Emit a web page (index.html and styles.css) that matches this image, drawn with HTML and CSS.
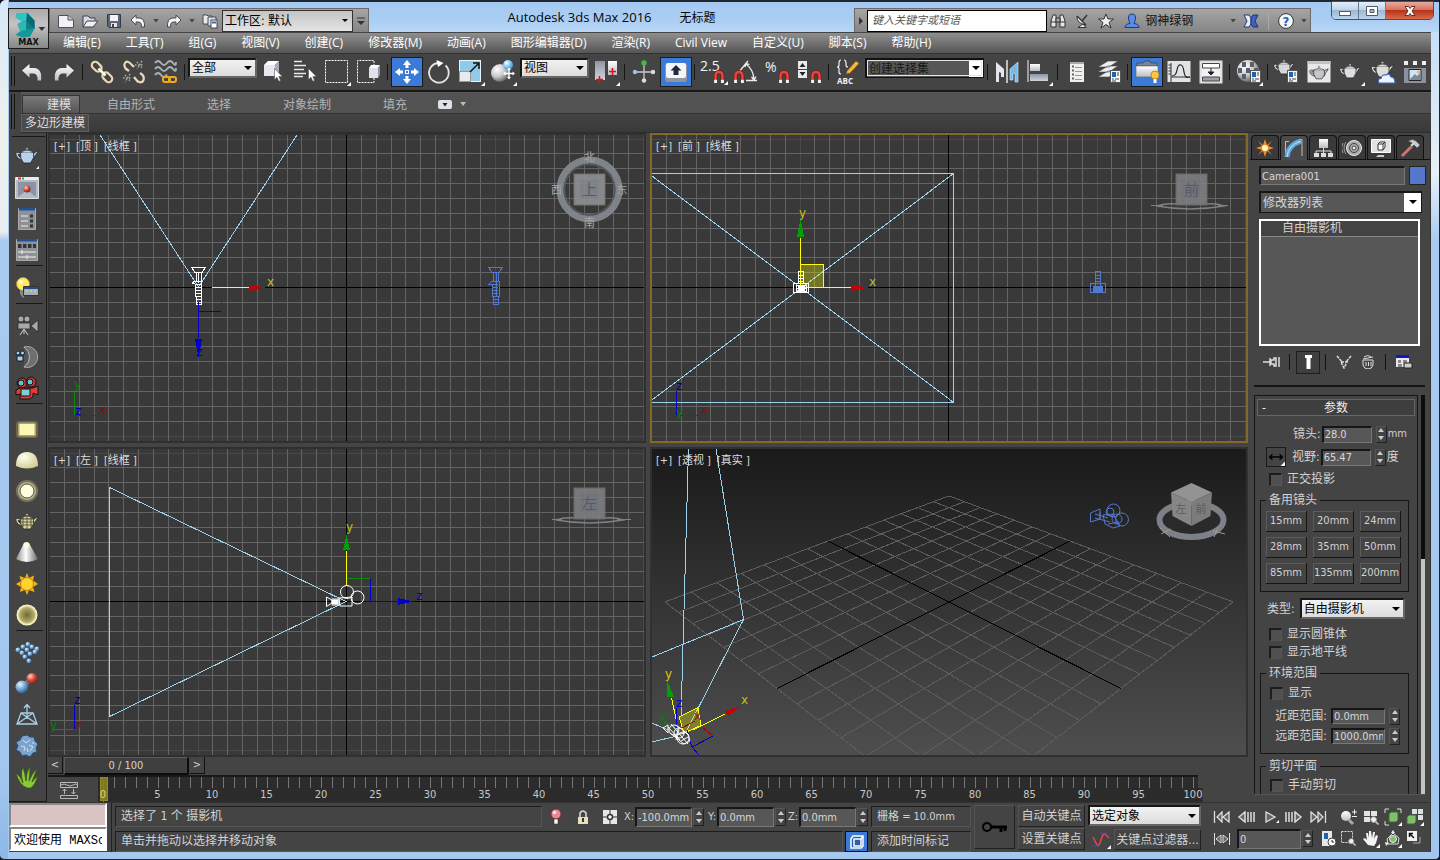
FILE: index.html
```html
<!DOCTYPE html>
<html lang="zh-CN">
<head>
<meta charset="utf-8">
<title>Autodesk 3ds Max 2016 - 无标题</title>
<link rel="stylesheet" href="styles.css">
</head>
<body>
<svg class="defs" width="0" height="0" aria-hidden="true">
  <defs>
    <linearGradient id="metal" x1="0" y1="0" x2="0" y2="1"><stop offset="0" stop-color="#ffffff"/><stop offset="1" stop-color="#b9bdc6"/></linearGradient>
    <linearGradient id="steel" x1="0" y1="0" x2="0" y2="1"><stop offset="0" stop-color="#8e95a5"/><stop offset="1" stop-color="#cfd3dc"/></linearGradient>
    <radialGradient id="ball" cx=".35" cy=".3" r=".8"><stop offset="0" stop-color="#ffffff"/><stop offset=".5" stop-color="#c9c9c9"/><stop offset="1" stop-color="#4a4a4a"/></radialGradient>
    <radialGradient id="blueball" cx=".35" cy=".3" r=".8"><stop offset="0" stop-color="#e8f6ff"/><stop offset=".5" stop-color="#6fa3d2"/><stop offset="1" stop-color="#1f4270"/></radialGradient>
    <radialGradient id="skyball" cx=".35" cy=".3" r=".8"><stop offset="0" stop-color="#ffffff"/><stop offset=".5" stop-color="#7cc4f0"/><stop offset="1" stop-color="#2f86c6"/></radialGradient>
    <radialGradient id="redball" cx=".35" cy=".3" r=".8"><stop offset="0" stop-color="#ffd0c0"/><stop offset=".5" stop-color="#d04838"/><stop offset="1" stop-color="#6a1810"/></radialGradient>
    <radialGradient id="cream" cx=".35" cy=".3" r=".8"><stop offset="0" stop-color="#fffff0"/><stop offset="1" stop-color="#cfc98c"/></radialGradient>
    <radialGradient id="disc" cx=".5" cy=".5" r=".5"><stop offset="0" stop-color="#6f6832"/><stop offset=".7" stop-color="#b3ab70"/><stop offset=".85" stop-color="#ece5a8"/><stop offset="1" stop-color="#fffbd0"/></radialGradient>
    <linearGradient id="cone" x1="0" y1="0" x2="1" y2="0"><stop offset="0" stop-color="#8a8a8a"/><stop offset=".45" stop-color="#ffffff"/><stop offset="1" stop-color="#666"/></linearGradient>
    <linearGradient id="dusk" x1="0" y1="0" x2="0" y2="1"><stop offset="0" stop-color="#1a1a1a"/><stop offset="1" stop-color="#4e4e4e"/></linearGradient>
    <symbol id="magnet" viewBox="0 0 10 12"><path d="M1.800 9V5a3.200 3.200 0 0 1 6.400 0V9" fill="none" stroke="#7c0c0c" stroke-width="3.400"/><path d="M1.800 9V5a3.200 3.200 0 0 1 6.400 0V9" fill="none" stroke="#e8493c" stroke-width="2.200"/><path d="M.500 9H3.200V12H.500zM6.800 9H9.500V12H6.800z" fill="#f2f2f2"/></symbol>
    <symbol id="cursor" viewBox="0 0 9 14"><path d="M.500.500V11.500L3 9.300 4.800 13.300 6.600 12.500 4.800 8.600H8.300z" fill="#fff" stroke="#555" stroke-width=".6"/></symbol>
    <symbol id="corner" viewBox="0 0 4 4"><path d="M4 0V4H0z" fill="#fff"/></symbol>
    <symbol id="teapot" viewBox="0 0 24 18"><path d="M6 6Q0 4 1 8 2 12 7 13L6.600 11Q3 9 3.200 7.500 4 6.800 6 7.500zM17 9Q18.500 5 23 4L22.500 5.500Q20 8 18 13z" stroke="#222" stroke-width=".8"/><path d="M5.500 5.500Q12 2.500 18.500 5.500 20 11 15.500 16H8.500Q4.500 11 5.500 5.500z" stroke="#222" stroke-width=".8"/><path d="M6.500 4.800Q12 1.500 17.500 4.800 12 6.500 6.500 4.800zM11 2.600a1.200 1.200 0 1 1 2 0z" stroke="#444" stroke-width=".4"/></symbol>
    <symbol id="panel" viewBox="0 0 11 13"><rect x=".500" y=".500" width="10" height="12" fill="#f4f4f4" stroke="#555"/><rect x="2" y="2" width="4" height="5" fill="#1e62b4"/><path d="M7 3H9M7 5H9M2 9H4M5 9H9M2 11H6" stroke="#444"/></symbol>
    <symbol id="lens" viewBox="0 0 10 10"><circle cx="4" cy="4" r="3.200" fill="#eef2f6" stroke="#999"/><path d="M6.200 6.200L9.500 9.500" stroke="#bbb" stroke-width="2"/></symbol>
  </defs>
</svg>

<div class="window">
  <header class="titlebar">
    <button class="app-button" aria-label="应用程序菜单">
      <svg viewBox="0 0 41 41"><path d="M8 5L19 4 26 12 27 20 22 29 13 29 7 27 12 23 9 16 14 13 7 9z" fill="#1b9b9d"/><path d="M8 5L19 4 26 12 14 13 7 9z" fill="#31c3c1"/><path d="M9 16L18 13 27 20 18 22z" fill="#0f7f86"/><path d="M14 13L18 13 18 22 12 23 9 16z" fill="#2db7b5"/><path d="M7 27L18 22 27 20 22 29 14 30z" fill="#16989b"/><path d="M19 4L27 12V21L18 13z" fill="#0a6a74"/><path d="M31 19H38L34.500 23z" fill="#333"/></svg>
      <b>MAX</b>
    </button>
    <div class="qat">
      <button aria-label="新建"><svg viewBox="0 0 18 16"><path d="M1.500 2.500H11L16.500 7V14.500H1.500z" fill="#f0f2f5" stroke="#4c515c"/><path d="M11 2.500V7H16.500" fill="#c9ced8" stroke="#4c515c"/></svg></button>
      <button aria-label="打开"><svg viewBox="0 0 18 16"><path d="M2 14V3H7L9 5H14V7" fill="#d8dbe2" stroke="#3d414a"/><path d="M2 14L6 8H17L12 14z" fill="#eef0f4" stroke="#3d414a"/></svg></button>
      <button aria-label="保存"><svg viewBox="0 0 18 16"><path d="M2.500 1.500H15.500V14.500H4L2.500 13z" fill="#5e6576" stroke="#343a46"/><path d="M5 2H13V8H5z" fill="#f4f4f6"/><path d="M6 10H12V14H6z" fill="#dfe2e8"/><path d="M7 11H9V14H7z" fill="#444"/></svg></button>
      <button aria-label="撤消"><svg viewBox="0 0 18 16"><path d="M2 7L7 2V5H11Q16 6 15.500 14H12.500Q13 9.500 10 9H7V12z" fill="#f3f4f6" stroke="#444a56"/></svg></button>
      <i class="drop"></i>
      <button aria-label="重做"><svg viewBox="0 0 18 16"><path d="M16 7L11 2V5H7Q2 6 2.500 14H5.500Q5 9.500 8 9H11V12z" fill="#f3f4f6" stroke="#444a56"/></svg></button>
      <i class="drop"></i>
      <button aria-label="项目文件夹"><svg viewBox="0 0 18 16"><path d="M2 11V2H6L7 3H11V11z" fill="#e8eaee" stroke="#444a56"/><path d="M7 13V4H15V13z" fill="#dde0e6" stroke="#444a56"/><rect x="10" y="7" width="6" height="8" fill="#fff" stroke="#444"/><rect x="11" y="8.500" width="4" height="2" fill="#2b6dbd"/></svg></button>
      <span class="pick workspace"><select aria-label="工作区"><option>工作区: 默认</option></select></span>
      <button class="more" aria-label="自定义"><svg viewBox="0 0 10 10"><path d="M1 2H9" stroke="#333"/><path d="M1 5H9L5 9z" fill="#333"/></svg></button>
    </div>
    <h1 class="title"><span class="app">Autodesk 3ds Max 2016</span><span>无标题</span></h1>
    <div class="infocenter">
      <button class="expand" aria-label="展开"><svg viewBox="0 0 6 8"><path d="M1 0L5 4 1 8z" fill="#333"/></svg></button>
      <input class="search" type="text" placeholder="键入关键字或短语" aria-label="搜索">
      <button aria-label="查找"><svg viewBox="0 0 18 16"><path d="M2 14V8L4 2H7V14zM11 14V2H14L16 8V14z" fill="#e4e6ea" stroke="#333"/><path d="M7 5H11V9H7z" fill="#aaa" stroke="#333"/><path d="M2 9H7M11 9H16" stroke="#333"/></svg></button>
      <button aria-label="通讯中心"><svg viewBox="0 0 18 16"><path d="M4 3Q3 10 13 12z" fill="#eee" stroke="#333"/><path d="M4 3L13 12M9 8L14 2" stroke="#333" stroke-width="1.400"/><path d="M5 14.500H13L10 11z" fill="#eee" stroke="#333"/></svg></button>
      <button aria-label="收藏夹"><svg viewBox="0 0 18 16"><path d="M9 1L11 6H16.500L12 9.500 14 15 9 11.500 4 15 6 9.500 1.500 6H7z" fill="#eceef2" stroke="#333"/></svg></button>
      <button class="user"><svg viewBox="0 0 18 16"><path d="M2 14.500Q2 11 7 10.500L6 8Q4 1 9 1 14 1 12 8L11 10.500Q16 11 16 14.500z" fill="#5b8ce6" stroke="#1d3a80"/></svg><span>钢神绿钢</span></button>
      <i class="drop"></i>
      <button aria-label="Exchange"><svg viewBox="0 0 18 16"><path d="M2 2H7L9 5V11L7 14H2L5 8z" fill="#e8ebf5" stroke="#1f3474"/><path d="M16 2H11L9 5V11L11 14H16L13 8z" fill="#3f62bd" stroke="#1f3474"/></svg></button>
      <i class="rule"></i>
      <button aria-label="帮助"><svg viewBox="0 0 18 16"><circle cx="9" cy="8" r="7.400" fill="#f6f7fa" stroke="#333"/><text x="9" y="12.500" text-anchor="middle" font-size="13" font-weight="700" fill="#2a5db0">?</text></svg></button>
      <i class="drop"></i>
    </div>
    <div class="winbuttons">
      <button aria-label="最小化"><svg viewBox="0 0 14 12"><rect x="1.500" y="6.500" width="11" height="4" fill="#fff" stroke="#555b66"/></svg></button>
      <button aria-label="最大化"><svg viewBox="0 0 14 12"><path d="M1.500 1.500H12.500V10.500H1.500zM5 4.500V7.500H9V4.500z" fill="#fff" fill-rule="evenodd" stroke="#555b66"/></svg></button>
      <button class="close" aria-label="关闭"><svg viewBox="0 0 14 12"><path d="M2 1.500H5.500L7 3.500 8.500 1.500H12L9 6 12 10.500H8.500L7 8.500 5.500 10.500H2L5 6z" fill="#fff" stroke="#5c3030"/></svg></button>
    </div>
  </header>

  <nav class="menubar">
    <a href="#">编辑(E)</a><a href="#">工具(T)</a><a href="#">组(G)</a><a href="#">视图(V)</a><a href="#">创建(C)</a><a href="#">修改器(M)</a><a href="#">动画(A)</a><a href="#">图形编辑器(D)</a><a href="#">渲染(R)</a><a href="#">Civil View</a><a href="#">自定义(U)</a><a href="#">脚本(S)</a><a href="#">帮助(H)</a>
  </nav>

  <div class="toolbar">
    <i class="grip"></i>
    <button aria-label="撤消"><svg viewBox="0 0 24 24"><path d="M2 10.500L9.500 4V8H14Q22.500 8.500 21 20.500H17.500Q18 14.500 14 13.500H9.500V17.500z" fill="url(#metal)"/></svg></button>
    <button aria-label="重做"><svg viewBox="0 0 24 24"><path d="M22 10.500L14.500 4V8H10Q1.500 8.500 3 20.500H6.500Q6 14.500 10 13.500H14.500V17.500z" fill="url(#metal)"/></svg></button>
    <i class="sep"></i>
    <button aria-label="选择并链接"><svg viewBox="0 0 24 24" fill="none" stroke="#ead9b6" stroke-width="2.200"><g transform="rotate(45 12 12)"><rect x="-1" y="8.500" width="11" height="7" rx="3.500"/><rect x="14" y="8.500" width="11" height="7" rx="3.500"/><path d="M7 12H17" stroke="#fff6e0" stroke-width="2.600"/></g></svg></button>
    <button aria-label="断开当前选择链接"><svg viewBox="0 0 24 24" fill="none" stroke="#ead9b6" stroke-width="2.200"><path d="M5 10Q1 6 3 3T9 4L12 7M3 8L7 11M15 21Q20 24 21.500 20T18 13M12 17L16 22" /><g stroke="#aaa" stroke-width="1.500" stroke-dasharray="1.500 1.500"><path d="M15 2L20 8M13 5H22M20 1L15 9M3 15L8 21M1 18H10M8 14L3 22"/></g></svg></button>
    <button aria-label="绑定到空间扭曲"><svg viewBox="0 0 24 24" fill="none"><path d="M1 3Q4 -1 7 3T13 3 19 3 22 2M1 9Q4 5 7 9T13 9 19 9 22 8M1 15Q4 11 7 15T13 14.500" stroke="#a9b0b8" stroke-width="2"/><g stroke="#f4a81d" stroke-width="2"><rect x="9" y="17" width="7" height="5" rx="2"/><rect x="15" y="17" width="7" height="5" rx="2"/></g></svg></button>
    <i class="sep"></i>
    <span class="pick light narrow"><select aria-label="选择过滤器"><option>全部</option></select></span>
    <button aria-label="选择对象"><svg viewBox="0 0 24 24"><path d="M3 5L7 1H18L14 5z" fill="#fff"/><path d="M3 5H14V16H3z" fill="#e7e9ee"/><path d="M14 5L18 1V12L14 16z" fill="#a9aebb"/><use href="#cursor" x="13" y="8" width="9" height="14"/></svg></button>
    <button aria-label="按名称选择"><svg viewBox="0 0 24 24"><path d="M1 1.500H9M1 5.500H13M1 9.500H11M1 13.500H13M1 16.500H10" stroke="#e8e8e8" stroke-width="1.500"/><use href="#cursor" x="15" y="8" width="9" height="14"/></svg></button>
    <button aria-label="矩形选择区域"><svg viewBox="0 0 24 24"><rect x=".500" y=".500" width="22" height="22" fill="none" stroke="#fff" stroke-dasharray="2 1"/><use href="#corner" x="22" y="22" width="4" height="4"/></svg></button>
    <button aria-label="窗口/交叉"><svg viewBox="0 0 24 24"><path d="M17 6V.500H.500V22.500H17V18" fill="none" stroke="#fff" stroke-dasharray="2 1"/><path d="M12 8L14 5H23L21 8z" fill="#fff"/><path d="M12 8H21V18H12z" fill="#dfe3ea"/><path d="M21 8L23 5V15L21 18z" fill="#8f96a5"/></svg></button>
    <i class="sep"></i>
    <button class="on" aria-label="选择并移动"><svg viewBox="0 0 24 24" fill="#fff"><path d="M12 0L16 5H13.500V8H10.500V5H8zM12 24L16 19H13.500V16H10.500V19H8zM0 12L5 8V10.500H8V13.500H5V16zM24 12L19 8V10.500H16V13.500H19V16z"/><rect x="10.500" y="10.500" width="3" height="3" fill="none" stroke="#fff"/></svg></button>
    <button aria-label="选择并旋转"><svg viewBox="0 0 24 24"><path d="M11 3A9.800 9.800 0 1 0 18.500 5.500" fill="none" stroke="#e6e6e6" stroke-width="1.800"/><path d="M9.500 0L16.500 3 11 7z" fill="#fff"/></svg></button>
    <button aria-label="选择并缩放"><svg viewBox="0 0 24 24"><rect x=".500" y=".500" width="21" height="21" fill="#8fcbe6" stroke="#e6f6ff"/><rect x=".500" y="11.500" width="11" height="10" fill="#e8eaed" stroke="#999"/><path d="M11 12L19 4M14 3H20V9" fill="none" stroke="#111" stroke-width="1.500"/><use href="#corner" x="22" y="22" width="4" height="4"/></svg></button>
    <button aria-label="选择并放置"><svg viewBox="0 0 24 24"><circle cx="9" cy="13" r="9" fill="url(#ball)"/><circle cx="17" cy="5" r="5" fill="url(#skyball)"/><path d="M18 9V18M13.500 13.500H22.500" stroke="#fff" stroke-width="1.500"/><path d="M18 7.500L20 10H16zM18 19.500L20 17H16zM12 13.500L14.500 11.500V15.500zM24 13.500L21.500 11.500V15.500z" fill="#fff"/><use href="#corner" x="22" y="22" width="4" height="4"/></svg></button>
    <span class="pick light narrow gap"><select aria-label="参考坐标系"><option>视图</option></select></span>
    <button aria-label="使用轴点中心"><svg viewBox="0 0 24 24"><path d="M1 1H11V20H1z" fill="url(#steel)"/><path d="M14 1H23V15H14z" fill="url(#metal)"/><path d="M5.500 16V23M2 19.500H9M18.500 8V15M15 11.500H22" stroke="#d8141a" stroke-width="1.600"/><use href="#corner" x="22" y="22" width="4" height="4"/></svg></button>
    <i class="sep"></i>
    <button aria-label="选择并操纵"><svg viewBox="0 0 24 24"><path d="M12 2V22M2 12H22" stroke="#c9c9c9" stroke-width="1.300"/><circle cx="12" cy="3" r="2.700" fill="#49b93c"/><circle cx="3" cy="12" r="2.200" fill="#a8c0d6"/><circle cx="21" cy="12" r="2.200" fill="#ddd"/><circle cx="12" cy="20.500" r="2.200" fill="#ddd"/></svg></button>
    <button class="on" aria-label="键盘快捷键覆盖切换"><svg viewBox="0 0 24 24"><rect x="1" y="3" width="22" height="19" rx="3" fill="#8d94a3"/><rect x="2" y="3" width="20" height="15" rx="2" fill="#f4f5f7"/><path d="M12 5L17.500 10.500H14.500V15H9.500V10.500H6.500z" fill="#222a3a"/></svg></button>
    <i class="sep"></i>
    <button aria-label="捕捉开关"><svg viewBox="0 0 24 24"><text x="-2" y="11" class="glyph">2.5</text><use href="#magnet" x="11" y="10" width="12" height="13"/><use href="#corner" x="22" y="21" width="4" height="4"/></svg></button>
    <button aria-label="角度捕捉"><svg viewBox="0 0 24 24" fill="none" stroke="#eee" stroke-width="1.300"><path d="M4 13L14 1M12 20.500H23M12 4Q19 9 20 19M11 7L12 3.500 15.500 4.500M17.500 17L20 20 22 16.500"/><use href="#magnet" x="-1" y="10" width="12" height="13" stroke="none"/></svg></button>
    <button aria-label="百分比捕捉"><svg viewBox="0 0 24 24"><text x="-1" y="12" class="glyph">%</text><use href="#magnet" x="12" y="10" width="12" height="13"/></svg></button>
    <button aria-label="微调器捕捉"><svg viewBox="0 0 24 24"><path d="M0 1H9V9H0zM0 10H9V18H0z" fill="#e8eaee"/><path d="M1.500 7L4.500 3 7.500 7zM1.500 12L4.500 16 7.500 12z" fill="#222"/><use href="#magnet" x="12" y="10" width="12" height="13"/></svg></button>
    <i class="sep"></i>
    <button aria-label="编辑命名选择集"><svg viewBox="0 0 24 24"><g fill="none" stroke="#f2f2f2" stroke-width="1.200"><path d="M5 0Q3 0 3 3V5Q3 7 1 7 3 7 3 9V12Q3 14 5 14M8 0Q10 0 10 3V5Q10 7 12 7"/></g><path d="M11 11L20 1 23 3.500 14 13 10.500 14z" fill="#f6b83c" stroke="#8a5a10" stroke-width=".7"/><text x="1" y="24" class="abc">ABC</text></svg></button>
    <span class="pick wide gap"><select aria-label="命名选择集"><option>创建选择集</option></select></span>
    <i class="sep"></i>
    <button aria-label="镜像"><svg viewBox="0 0 24 24"><path d="M1 2L9 9V17H6V13L4 12V22H1z" fill="#e4e6ec"/><path d="M23 2L15 9V20H18V14L20 13V22H23z" fill="#74b9e8" stroke="#d9f0ff" stroke-width=".6"/><path d="M12 0V23" stroke="#fff" stroke-width="1.300"/></svg></button>
    <button aria-label="对齐"><svg viewBox="0 0 24 24"><path d="M1 0V22" stroke="#ccc" stroke-width="1.300"/><path d="M3 4H13V11H3z" fill="url(#metal)"/><path d="M3 14H21V21H3z" fill="url(#steel)"/><use href="#corner" x="22" y="22" width="4" height="4"/></svg></button>
    <i class="sep"></i>
    <button aria-label="场景资源管理器"><svg viewBox="0 0 24 24"><path d="M5 2H19V22H5z" fill="#f0f0ee"/><path d="M5 2H19V4H5z" fill="#aaa"/><path d="M10 7.500H17M10 11.500H17M10 15.500H17M10 19.500H17" stroke="#999"/><path d="M7 6.500H9M7 10.500H9M7 14.500H9M7 18.500H9" stroke="#666" stroke-width="2"/></svg></button>
    <button aria-label="层资源管理器"><svg viewBox="0 0 24 24"><path d="M1 7L11 1H21L12 7zM1 12L11 6H21L12 12zM1 17L11 11H21L12 17z" fill="#eceef1" stroke="#444" stroke-width=".6"/><use href="#panel" x="13" y="10" width="11" height="13"/></svg></button>
    <i class="sep"></i>
    <button class="on" aria-label="切换功能区"><svg viewBox="0 0 24 24"><path d="M2 3H8L10 1H15L16 3H22V6H2z" fill="#7c8495" stroke="#333" stroke-width=".6"/><path d="M1 6H23V17H1z" fill="url(#metal)" stroke="#666" stroke-width=".6"/><circle cx="20" cy="15" r="4" fill="#ffc94a" stroke="#d88410"/><path d="M18.500 19H21.500V23H18.500z" fill="#fff"/></svg></button>
    <button aria-label="曲线编辑器"><svg viewBox="0 0 24 24"><path d="M.500 1H23.500V22H.500z" fill="#e2e3e5"/><path d="M4 3V22M4 17H23M1.500 5H4M1.500 8H4M1.500 11H4M1.500 14H4" stroke="#333"/><path d="M5 16Q9 16 10 10T14 5Q16 5 17 12T23 17" fill="none" stroke="#222" stroke-width="1.200"/></svg></button>
    <button aria-label="图解视图"><svg viewBox="0 0 24 24"><path d="M1.500 1.500H22.500V22.500H1.500z" fill="#f1f1f1" stroke="#ddd" stroke-width="2"/><path d="M3.500 3.500H20.500V8H3.500z" fill="#fff" stroke="#444"/><path d="M3.500 17H20.500V21H3.500z" fill="#9ba1ae" stroke="#444"/><path d="M12 8V12M9 12H15L12 15z" stroke="#222" fill="#222"/></svg></button>
    <i class="sep"></i>
    <button aria-label="材质编辑器"><svg viewBox="0 0 24 24"><circle cx="11" cy="11" r="11" fill="url(#ball)"/><path d="M5 2H9V7H5zM13 2H17V7H13zM1 8H5V13H1zM9 8H13V13H9zM5 14H9V19H5zM17 8H21V12H17z" fill="#58606e"/><use href="#panel" x="13" y="10" width="11" height="13"/><use href="#corner" x="22" y="22" width="4" height="4"/></svg></button>
    <i class="sep"></i>
    <button aria-label="渲染设置"><svg viewBox="0 0 24 24"><use href="#teapot" x="-2" y="-1" width="22" height="17" fill="#d6d8dc"/><use href="#panel" x="12" y="10" width="11" height="13"/></svg></button>
    <button aria-label="渲染帧窗口"><svg viewBox="0 0 24 24"><path d="M.500 1H23.500V22.500H.500z" fill="#e8e8ea"/><path d="M.500 1H23.500V4H.500z" fill="#c0c3ca"/><use href="#teapot" x="2" y="5" width="20" height="16" fill="#c4c6cb"/></svg></button>
    <button aria-label="渲染产品"><svg viewBox="0 0 24 24"><use href="#teapot" x="0" y="3" width="22" height="17" fill="#dcdee2"/><use href="#corner" x="22" y="22" width="4" height="4"/></svg></button>
    <button aria-label="云渲染"><svg viewBox="0 0 24 24"><use href="#teapot" x="-1" y="1" width="25" height="18" fill="#dcdcd8"/><path d="M8 23Q6 19 10 18.500 11 14 15 15 18 12.500 20 17 24 17 24 23z" fill="#eef4fd" stroke="#3769c6" stroke-width="1.200"/></svg></button>
    <button aria-label="渲染库"><svg viewBox="0 0 24 24"><path d="M1 1H5V5H1zM10 1H14V5H10zM19 1H23V5H19z" fill="#eee"/><path d="M1 8H23V23H1z" fill="#8b919e"/><path d="M6 9.500H18V20.500H6z" fill="#cfe6f5" stroke="#222"/><path d="M7 19L12 14 14 16 17 13V20H7z" fill="#7e8a98"/><circle cx="15.500" cy="12" r="1.500" fill="#f2b23a"/></svg></button>
  </div>

  <div class="ribbon">
    <i class="grip"></i>
    <div class="ribbon-body">
      <div class="ribbon-tabs">
        <button class="active">建模</button><button>自由形式</button><button>选择</button><button>对象绘制</button><button>填充</button>
        <button class="pill" aria-label="最小化功能区"><svg viewBox="0 0 14 9"><rect width="14" height="9" rx="2" fill="#dfe2e8"/><path d="M4.500 3H9.500L7 6.500z" fill="#222"/></svg></button><i class="drop pale"></i>
      </div>
      <div class="ribbon-panel"><span>多边形建模</span></div>
    </div>
  </div>

  <main class="workspace-area">
    <aside class="leftbar">
      <button aria-label="茶壶"><svg viewBox="0 0 24 24"><use href="#teapot" x="0" y="2" width="24" height="18" fill="#b7d2ea"/><use href="#corner" x="21" y="20" width="4" height="4"/></svg></button>
      <button aria-label="渲染窗口"><svg viewBox="0 0 24 24"><path d="M.500 1.500H23.500V22.500H.500z" fill="#b5bcc7" stroke="#ddd"/><path d="M1 1H23V4H1z" fill="#ececec"/><path d="M3 2.500H6" stroke="#c33" stroke-width="2"/><path d="M7 2.500H9" stroke="#3a3" stroke-width="2"/><path d="M3 21V6H21V21L12 14z" fill="#8a94a4"/><circle cx="12" cy="13" r="3.500" fill="url(#redball)"/></svg></button>
      <button aria-label="列表面板"><svg viewBox="0 0 24 24"><path d="M3.500 1.500H20.500V22.500H3.500z" fill="#8d9094" stroke="#aaa"/><path d="M4 1H20V3.500H4z" fill="#1c5398"/><path d="M6 9H13M6 14H13M6 19H13" stroke="#eee"/><path d="M15 7.500H18V10.500H15zM15 12.500H18V15.500H15zM15 17.500H18V20.500H15z" fill="#333"/></svg></button>
      <button aria-label="滑块面板"><svg viewBox="0 0 24 24"><path d="M1.500 1.500H22.500V22.500H1.500z" fill="#8d9094" stroke="#aaa"/><path d="M2 1H22V3.500H2z" fill="#1c5398"/><path d="M3 6H6.500V10H3zM8 6H11.500V10H8zM13 6H16.500V10H13zM18 6H21V10H18z" fill="#333"/><path d="M3 14H21M3 19H21M7 12V16M12 17V21" stroke="#f2f2f2"/></svg></button>
      <i class="bar"></i>
      <button aria-label="灯光列表"><svg viewBox="0 0 24 24"><circle cx="8" cy="8" r="6.500" fill="#ffe86b" stroke="#b99b2a" stroke-width=".6"/><circle cx="6" cy="6" r="2" fill="#fffbd8"/><path d="M5 14H11V18L8 22 5 18z" fill="#888"/><path d="M8.500 10.500H23.500V19.500H8.500z" fill="#a8adb4" stroke="#333"/><path d="M9 11H23V13H9z" fill="#1c5398"/><path d="M11 15H22" stroke="#f3e15a" stroke-dasharray="2 2"/></svg></button>
      <i class="bar"></i>
      <button aria-label="摄影机"><svg viewBox="0 0 24 24"><g fill="#a8a8a8" stroke="#222" stroke-width=".7"><circle cx="6" cy="5" r="3"/><circle cx="12" cy="5" r="3"/><path d="M3 9H15V15H3zM16 12L23 6V18z"/></g><path d="M9 15L5 21M9 15L13 21M9 15V20" stroke="#ccc"/></svg></button>
      <button aria-label="摄影机视图"><svg viewBox="0 0 24 24"><path d="M9 2A10.500 10.500 0 1 1 9 22Q14 12 9 2z" fill="#6f6f6f" stroke="#aaa"/><path d="M9 2A12 12 0 0 1 9 22" fill="#555" stroke="#bbb"/><g fill="#a9cfe8" stroke="#123"><circle cx="3" cy="8" r="2"/><circle cx="7.500" cy="8" r="2"/><path d="M2 11H8V16H2z"/></g></svg></button>
      <button aria-label="立体摄影机"><svg viewBox="0 0 24 24"><g stroke="#111"><circle cx="7" cy="7" r="5" fill="#d83434"/><circle cx="16" cy="6" r="5" fill="#d83434"/><circle cx="6" cy="7" r="3" fill="#5cc6cf"/><circle cx="15" cy="6" r="3" fill="#5cc6cf"/><path d="M1 14L5 12H18L23 10V19L18 17V21L14 23H5V18L1 19z" fill="#e23c3c"/><path d="M6 13H15V20H6z" fill="#7ad0d6"/></g></svg></button>
      <i class="bar tall"></i>
      <button aria-label="平面灯"><svg viewBox="0 0 24 24"><rect x="1" y="4" width="22" height="17" rx="3" fill="#6a6848"/><rect x="3" y="5.500" width="18" height="14" rx="2" fill="#a9a678"/><rect x="4.500" y="7" width="15" height="11" fill="#fdf9b4"/></svg></button>
      <button aria-label="穹顶灯"><svg viewBox="0 0 24 24"><path d="M1 18Q1 4 12 4T23 18Q12 23 1 18z" fill="url(#cream)"/></svg></button>
      <button aria-label="球体灯"><svg viewBox="0 0 24 24"><circle cx="12" cy="12" r="11" fill="#77745a"/><circle cx="12" cy="12" r="9" fill="#b9b695"/><circle cx="12" cy="12" r="7" fill="#fffee0" stroke="#55533a"/></svg></button>
      <button aria-label="网格灯"><svg viewBox="0 0 24 24"><use href="#teapot" x="0" y="3" width="24" height="18" fill="#d9d2a4"/><path d="M6 9H18M6 12H18M7 15H17M8 7V17M12 6V19M16 7V17" stroke="#4c482c" stroke-width=".8"/></svg></button>
      <button aria-label="聚光灯"><svg viewBox="0 0 24 24"><path d="M9 2H14L23 18Q12 24 1 18z" fill="url(#cone)"/><circle cx="11.500" cy="4" r="3" fill="#fffbe0"/></svg></button>
      <button aria-label="太阳"><svg viewBox="0 0 24 24"><path d="M12 1L14 6 19 3.500 18 8.500 23 12 18 15 19.500 20 14 18 12 23 10 18 5 20 6 15 1 12 6 9 4.500 4 10 6z" fill="#f7b51b"/><circle cx="12" cy="12" r="6.500" fill="#ffd22c" stroke="#c07c0a"/></svg></button>
      <button aria-label="环境灯"><svg viewBox="0 0 24 24"><circle cx="12" cy="12" r="10.500" fill="url(#disc)"/></svg></button>
      <i class="bar"></i>
      <button aria-label="散布"><svg viewBox="0 0 24 24" fill="url(#blueball)"><circle cx="3" cy="9" r="2.500"/><circle cx="8" cy="6" r="2.500"/><circle cx="13" cy="3.500" r="2.500"/><circle cx="7" cy="12" r="2.500"/><circle cx="12" cy="9" r="2.500"/><circle cx="17" cy="6" r="2.500"/><circle cx="22" cy="8" r="2.500"/><circle cx="10" cy="16" r="2.500"/><circle cx="15" cy="13" r="2.500"/><circle cx="20" cy="11" r="2.500"/><circle cx="14" cy="20" r="2.500"/></svg></button>
      <button aria-label="代理"><svg viewBox="0 0 24 24"><path d="M7 15L17 6" stroke="#777" stroke-width="5"/><circle cx="7" cy="15" r="6.500" fill="url(#blueball)"/><circle cx="17" cy="6.500" r="5.500" fill="url(#redball)"/></svg></button>
      <button aria-label="平面"><svg viewBox="0 0 24 24" fill="none" stroke="#a9cfe8" stroke-width="1.300"><path d="M6 10H18L22 21H2zM6 10L22 21M18 10L2 21M12 16V2M9 5L12 1.500 15 5"/></svg></button>
      <button aria-label="毛石"><svg viewBox="0 0 24 24"><path d="M12 1L15 3 19 3 20 7 23 10 21 14 22 18 18 19 15 23 11 21 7 22 5 18 1 16 3 12 1 8 5 6 7 2z" fill="#7ba3cb" stroke="#2c4c72"/><path d="M8 6L11 9 15 6M6 12L10 13 9 17M14 11L18 13 15 17M12 14L13 18M17 8L19 10" stroke="#cfe2f4" fill="none"/></svg></button>
      <button aria-label="毛发"><svg viewBox="0 0 24 24"><path d="M12 23Q4 20 1 8 6 12 8 18 5 8 8 2 10 8 11 16 11 8 15 1 15 10 14 16 17 8 22 4 19 11 17 17 20 13 23 11 20 20 16 23z" fill="#8ac73a" stroke="#355a12" stroke-width=".8"/></svg></button>
    </aside>

    <section class="center">
      <div class="viewports">
        <div class="viewport">
          <svg class="canvas" viewBox="50 135 594 306" preserveAspectRatio="xMidYMid slice">
            <g data-grid="346,287"></g>
            <g class="crisp">
              <path class="cone" d="M100 135L198.500 287 297 135"/>
              <g class="wire white"><path d="M191.500 267.500H205.500L202 272.500H195zM196 272V281H201V272M192 283L195 281H201V296H195V284zM196 296V304H201.500V296M195 284H201M195 287H201M195 290H201M195 293H201M196 299H201M196 302H201M198.500 272V283"/></g>
              <path d="M212 287.500H249" stroke="#ff0"/><path d="M221.500 288V311" stroke="#b40000"/><path d="M198.500 302V338M199 311.500H221" stroke="#0000c8"/>
              <path d="M249 285L265 287.500 249 291z" fill="#c80000"/><path d="M195 339H202L198.500 357z" fill="#0000c8"/>
              <path d="M74.500 392V415" stroke="#0a8c0a"/><path d="M75 415.500H100" stroke="#b40000"/>
              <g class="wire blue"><path d="M488.500 267.500H502.500L499 272.500H492zM493 272V281H498V272M489 284L492 281H499V296H492V284zM493 296V304H498.500V296M492 284H498M492 287H498M492 290H498M492 293H498M493 299H498M493 302H498M496 272V296"/></g>
            </g>
            <g class="axis"><text x="267" y="286" fill="#c8be14">x</text><text x="196" y="356" fill="#0000c8">z</text><text x="74" y="388" fill="#0a7c0a">y</text><text x="75" y="415" fill="#0000c8">z</text><text x="99" y="414" fill="#8c0a0a">x</text></g>
            <g class="cube"><circle cx="589.500" cy="189.500" r="29.500" fill="none" stroke="#868a92" stroke-width="7"/><circle cx="589.500" cy="189.500" r="25" fill="none" stroke="#5a5c60" stroke-width="1.500"/><rect x="574" y="174" width="31" height="31" fill="#8f9192" stroke="#777"/><rect x="580" y="180" width="19" height="19" fill="#858991"/><text x="589.500" y="195" text-anchor="middle" class="face">上</text>
              <g class="compass"><text x="589.500" y="161">北</text><text x="589.500" y="227">南</text><text x="556.500" y="194">西</text><text x="622" y="194">东</text></g></g>
          </svg>
          <div class="vlabel"><button>[+]</button><button>[顶 ]</button><button>[线框 ]</button></div>
        </div>
        <div class="viewport active">
          <svg class="canvas" viewBox="652 135 594 306" preserveAspectRatio="xMidYMid slice">
            <g data-grid="948,287"></g>
            <g class="crisp">
              <path class="cone" d="M652 173.500H953.500V402.500H652M652 176L953 402M652 400L953 174"/>
              <rect x="800.500" y="264.500" width="23" height="23" fill="#ffff00" fill-opacity=".3" stroke="#ff0"/>
              <path d="M800.500 238V272M814 287.500H851" stroke="#ff0"/><path d="M797 237H804L800.500 219z" fill="#00a000"/><path d="M851 285L868 287.500 851 291z" fill="#c80000"/>
              <g class="wire white"><path d="M793.500 283.500H808.500V292.500H793.500zM796 285H806V291H796zM798 284V271.500H803V284M798 275H803M798 278H803M798 281H803M797 288H806"/><path d="M798 285H804V291H798z" fill="#fff"/></g>
              <path d="M676.500 391V415" stroke="#0000c8"/><path d="M680 415.500H703" stroke="#b40000"/>
              <g class="wire blue"><path d="M1090.500 283.500H1105.500V292.500H1090.500zM1095 292V271.500H1100V292M1095 275H1100M1095 278H1100M1095 281H1100"/><path d="M1093 286H1102V291H1093z" fill="#5378d0"/></g>
            </g>
            <g class="axis"><text x="799" y="217" fill="#c8be14">y</text><text x="869" y="286" fill="#c8be14">x</text><text x="676" y="390" fill="#0000a8">z</text><text x="676" y="416" fill="#0a7c0a">y</text><text x="701" y="414" fill="#8c0a0a">x</text></g>
            <g class="cube"><path d="M1157 206Q1166 203 1176 204M1207 204Q1216 203 1224 206Q1190 212 1157 206" fill="none" stroke="#85888d" stroke-width="1.500"/><path d="M1151 205.500H1163M1218 205.500H1228" stroke="#85888d"/><rect x="1176" y="174" width="31" height="31" fill="#7e7f80" stroke="#6f7070"/><rect x="1182" y="180" width="19" height="19" fill="#787b82"/><text x="1191.500" y="195" text-anchor="middle" class="face">前</text></g>
          </svg>
          <div class="vlabel"><button>[+]</button><button>[前 ]</button><button>[线框 ]</button></div>
        </div>
        <div class="viewport">
          <svg class="canvas" viewBox="50 449 594 306" preserveAspectRatio="xMidYMid slice">
            <g data-grid="346,601"></g>
            <g class="crisp">
              <path class="cone" d="M346 601.500L109.500 487.500V716.500z"/>
              <path d="M346.500 551V586" stroke="#ff0"/><path d="M343 550H350L346.500 535z" fill="#00a000"/><path d="M347 578.500H370" stroke="#0a8c0a"/><path d="M370.500 579V601M360 601.500H398" stroke="#0000c8"/><path d="M398 598L414 601.500 398 605z" fill="#0000c8"/>
              <path d="M74.500 705V729" stroke="#0000c8"/><path d="M52 729.500H74" stroke="#0a8c0a"/>
            </g>
            <g class="wire white"><circle cx="347" cy="592" r="6.500"/><circle cx="357.500" cy="597.500" r="6.500"/><path d="M326.500 597V606.500L332 603V600zM332 599H339V605H332M339 598L352 597V606H340z"/><path d="M332 600H338V604H332z" fill="#fff"/></g>
            <g class="axis"><text x="346" y="531" fill="#c8be14">y</text><text x="416" y="600" fill="#0000c8">z</text><text x="74" y="704" fill="#0000a8">z</text><text x="50" y="729" fill="#0a7c0a">y</text><text x="75" y="728" fill="#8c0a0a">x</text></g>
            <g class="cube"><path d="M556 520Q565 517 574 518M605 518Q615 517 623 520Q590 526 556 520" fill="none" stroke="#85888d" stroke-width="1.500"/><path d="M552 519.500H562M617 519.500H631" stroke="#85888d"/><rect x="574" y="488" width="31" height="31" fill="#7e7f80" stroke="#6f7070"/><rect x="580" y="494" width="19" height="19" fill="#787b82"/><text x="589.500" y="509" text-anchor="middle" class="face">左</text></g>
          </svg>
          <div class="vlabel"><button>[+]</button><button>[左 ]</button><button>[线框 ]</button></div>
        </div>
        <div class="viewport">
          <svg class="canvas" viewBox="652 449 594 306" preserveAspectRatio="xMidYMid slice">
            <rect x="652" y="449" width="594" height="306" fill="url(#dusk)"/>
            <g id="floor" class="crisp"></g>
            <g class="crisp">
              <path class="cone" d="M688.500 449L681 717M716 449L743.500 619.500 652 657M743.500 619.500L687 730M652 723L668 730M652 742L677 736"/>
              <path d="M679 717L698 707.500 701 725.500 684 733z" fill="#ffff00" fill-opacity=".3" stroke="#ff0"/>
              <path d="M671.500 698L677 723M693 730L725 714" stroke="#ff0"/><path d="M667 680L674 697H667.500z" fill="#00a000"/><path d="M725 711L741 706 728 716z" fill="#c80000"/>
              <path d="M702 727L713 736M678 730L695 721" stroke="#b40000"/><path d="M713 736L692 747 687 730M692 747L699 755M676.500 708V730" stroke="#0000c8"/><path d="M664 722L677 729" stroke="#0a8c0a"/>
            </g>
            <g class="wire white"><circle cx="674" cy="730" r="5"/><circle cx="683" cy="738" r="6"/><circle cx="679" cy="733" r="5"/><path d="M663 728L668 725V733zM668 727L680 740M671 724L688 744M670 733L684 744 690 741 688 734 676 725M675 735L685 733M678 729L676 740M681 741L688 737"/></g>
            <g class="wire blue"><circle cx="1113.500" cy="510.500" r="6.500"/><circle cx="1110" cy="512" r="4"/><circle cx="1122" cy="519.500" r="6.500"/><circle cx="1117" cy="519" r="5"/><path d="M1090.500 522V513L1100 509V519zM1095 514L1108 518M1095 518L1110 522M1103 515L1113 514 1120 526 1113 528 1105 524zM1100 512V520M1108 524L1119 522"/></g>
            <g class="axis"><text x="665" y="678" fill="#d8ce14">y</text><text x="741" y="704" fill="#c8be14">x</text><text x="676" y="707" fill="#0000c8">z</text><text x="659" y="720" fill="#0a7c0a">y</text><text x="694" y="720" fill="#a01414">x</text></g>
            <g class="cube3d"><ellipse cx="1191.500" cy="520" rx="32" ry="17" fill="#2a2a2a" stroke="#7c8089" stroke-width="6"/><path d="M1191.500 483L1212 492.500 1191.500 502 1171 492.500z" fill="#939393"/><path d="M1171 492.500L1191.500 502V526L1172.500 516z" fill="#868686"/><path d="M1212 492.500L1191.500 502V526L1210.500 516z" fill="#7c7c7c"/><text x="1181" y="513" text-anchor="middle">左</text><text x="1201" y="513" text-anchor="middle">前</text><path d="M1160 528L1170 537M1161 534L1171 529M1213 531L1225 534M1218 527L1214 537" stroke="#9a9a9a"/></g>
          </svg>
          <div class="vlabel"><button>[+]</button><button>[透视 ]</button><button>[真实 ]</button></div>
        </div>
      </div>
      <div class="timeslider"><button>&lt;</button><button class="thumb">0 / 100</button><button>&gt;</button></div>
      <div class="trackbar">
        <button class="minicurve" aria-label="迷你曲线编辑器"><svg viewBox="0 0 18 18" fill="none" stroke="#b8b8b8"><path d="M.500 1.500H17.500V6.500H.500zM.500 14.500H17.500V17.500H.500zM1 4Q4 2 7 4T13 4 17 4M4.500 13V8M2.500 10L4.500 8 6.500 10M13.500 8V13M11.500 11L13.500 13 15.500 11"/></svg></button>
        <div class="ruler"><div id="ticks" class="ticks"></div></div>
      </div>
    </section>

    <aside class="command">
      <div class="tabs">
        <button aria-label="创建"><svg viewBox="0 0 20 20"><path d="M10 1L12 7 17 3 13 8 19 10 13 12 17 17 12 13 10 19 8 13 3 17 7 12 1 10 7 8 3 3 8 7z" fill="#f08a32"/><circle cx="10" cy="10" r="3" fill="#fff6b0"/></svg></button>
        <button class="active" aria-label="修改"><svg viewBox="0 0 20 20"><path d="M1.500 19V3.500H5M15 1.500H18V18" fill="none" stroke="#bbb"/><path d="M3 19Q4 7 17 3" fill="none" stroke="#5ea7dc" stroke-width="5"/><path d="M3 19Q4 7 17 3" fill="none" stroke="#c9e7fa"/></svg></button>
        <button aria-label="层次"><svg viewBox="0 0 20 20"><path d="M6 1H15V10H6z" fill="url(#metal)"/><path d="M10.500 10V13M3 15V13H18V15M10.500 13V15" stroke="#ddd" fill="none"/><path d="M1 15H6V19H1zM8 15H13V19H8zM15 15H20V19H15z" fill="#ddd"/></svg></button>
        <button aria-label="运动"><svg viewBox="0 0 20 20" fill="none"><circle cx="12" cy="10" r="7.500" fill="#aaa" stroke="#eee"/><circle cx="12" cy="10" r="4.500" stroke="#444"/><circle cx="12" cy="10" r="2" stroke="#444" fill="#eee"/><path d="M4 4Q0 10 4 16M1 5Q-2 10 1 15" stroke="#999"/></svg></button>
        <button aria-label="显示"><svg viewBox="0 0 20 20"><path d="M.500 1.500H19.500V14.500H.500z" fill="#dfe1e5" stroke="#fff"/><path d="M7 17H13V19H5z" fill="#ccc"/><path d="M7 6L9 4H14V9L12 12H7zM7 6H12V12M12 6L14 4" fill="#fff" stroke="#333"/></svg></button>
        <button aria-label="实用程序"><svg viewBox="0 0 20 20"><path d="M2 18L12 8" stroke="#c8746a" stroke-width="3"/><path d="M8 3Q13 0 16 3L20 7 17 10 14 7 12 9 10 7 12 5z" fill="#c9cdd3" stroke="#444" stroke-width=".6"/></svg></button>
      </div>
      <div class="namerow"><input type="text" value="Camera001" aria-label="对象名称"><button class="swatch" aria-label="颜色"></button></div>
      <span class="pick modlist"><select aria-label="修改器列表"><option>修改器列表</option></select></span>
      <ul class="stack"><li>自由摄影机</li></ul>
      <div class="stacktools">
        <button aria-label="锁定堆栈"><svg viewBox="0 0 18 14"><path d="M0 7H7M7 3V11M16 2V12" stroke="#ddd" stroke-width="1.500"/><path d="M8 5H11V3H13V11H11V9H8z" fill="none" stroke="#ddd" stroke-width="1.500"/></svg></button><i></i>
        <button class="pressed" aria-label="显示最终结果"><svg viewBox="0 0 18 14"><path d="M6 0H13V3H11.500V14H7.500V3H6z" fill="#fff"/></svg></button><i></i>
        <button aria-label="使唯一"><svg viewBox="0 0 18 14" fill="none" stroke="#ddd"><path d="M2 1L7 7M16 1L11 7M6 7H12L9 13z" stroke-dasharray="3 1" stroke-width="1.500"/></svg></button>
        <button aria-label="移除修改器"><svg viewBox="0 0 18 14" fill="none" stroke="#ddd"><path d="M5 2Q9 -1 12 2M4 5H14V10Q13 14 9 14 5 14 4 10zM4 4L14 2M7 7V11M9.500 7V11M12 7V11"/></svg></button><i></i>
        <button aria-label="配置修改器集"><svg viewBox="0 0 18 14"><path d="M1 0H14V12H1z" fill="#e8e8e8"/><path d="M1 0H14V3H1z" fill="#1414c8"/><path d="M3 5H6V8H3zM8 5H12V8H8zM3 9H7V12H3z" fill="#888"/><path d="M9 8H17V13H9z" fill="#ccc" stroke="#222"/></svg></button>
      </div>
      <div class="rollarea">
        <div class="rollout">
          <button class="rollhead"><span>-</span>参数</button>
          <div class="rollbody">
            <div class="field lensrow"><label for="lens-mm">镜头:</label><input id="lens-mm" value="28.0"><span class="spin"><button aria-label="增"></button><button aria-label="减"></button></span><span class="unit">mm</span></div>
            <div class="field lensrow"><button class="fovdir" aria-label="视野方向"><svg viewBox="0 0 20 20"><path d="M3 10H17M6 7L3 10 6 13M14 7L17 10 14 13" fill="none" stroke="#000" stroke-width="1.500"/><path d="M20 15V20H15z" fill="#fff"/></svg></button><label for="fov">视野:</label><input id="fov" value="65.47"><span class="spin"><button aria-label="增"></button><button aria-label="减"></button></span><span>度</span></div>
            <label class="check"><input type="checkbox">正交投影</label>
            <fieldset><legend>备用镜头</legend>
              <div class="stock"><button>15mm</button><button>20mm</button><button>24mm</button><button>28mm</button><button>35mm</button><button>50mm</button><button>85mm</button><button>135mm</button><button>200mm</button></div>
            </fieldset>
            <div class="field typerow"><label for="camtype">类型:</label><span class="pick light"><select id="camtype"><option>自由摄影机</option></select></span></div>
            <label class="check"><input type="checkbox">显示圆锥体</label>
            <label class="check"><input type="checkbox">显示地平线</label>
            <fieldset class="env"><legend>环境范围</legend>
              <label class="check"><input type="checkbox">显示</label>
              <div class="field range"><label for="near">近距范围:</label><input id="near" value="0.0mm"><span class="spin"><button aria-label="增"></button><button aria-label="减"></button></span></div>
              <div class="field range"><label for="far">远距范围:</label><input id="far" value="1000.0mm"><span class="spin"><button aria-label="增"></button><button aria-label="减"></button></span></div>
            </fieldset>
            <fieldset class="clip"><legend>剪切平面</legend>
              <label class="check"><input type="checkbox">手动剪切</label>
            </fieldset>
          </div>
        </div>
        <div class="scroll"><i></i></div>
      </div>
    </aside>
  </main>

  <footer class="status">
    <div class="script"><input class="macro" aria-label="宏录制器"><input class="listener" value="欢迎使用 MAXScript" aria-label="侦听器"></div>
    <div class="prompts">
      <div class="line">
        <p class="msg">选择了 1 个 摄影机</p>
        <button class="ico" aria-label="孤立当前选择"><svg viewBox="0 0 16 18"><circle cx="8" cy="6" r="5" fill="#e88a94" stroke="#8c2c36"/><circle cx="6.500" cy="4.500" r="1.800" fill="#fde"/><path d="M6 11H10V16H6z" fill="#fff" stroke="#333" stroke-width=".6"/></svg></button>
        <button class="ico" aria-label="选择锁定切换"><svg viewBox="0 0 16 18"><path d="M5 9V5Q8 1 11 5V9" fill="none" stroke="#ddd" stroke-width="1.500"/><path d="M3 9H13V16H3z" fill="#e9ddc0"/><path d="M8 10V14" stroke="#333" stroke-width="2"/></svg></button>
        <button class="ico" aria-label="绝对模式变换输入"><svg viewBox="0 0 16 18"><path d="M1 2H15V16H1z" fill="#e3e6ea"/><path d="M8 2V6M8 12V16M1 9H5M11 9H15" stroke="#333"/><circle cx="8" cy="9" r="2.500" fill="#fff" stroke="#333" stroke-width="1.500"/></svg></button>
        <div class="coords">
          <label for="cx">X:</label><input id="cx" value="-100.0mm"><span class="spin"><button aria-label="增"></button><button aria-label="减"></button></span>
          <label for="cy">Y:</label><input id="cy" value="0.0mm"><span class="spin"><button aria-label="增"></button><button aria-label="减"></button></span>
          <label for="cz">Z:</label><input id="cz" value="0.0mm"><span class="spin"><button aria-label="增"></button><button aria-label="减"></button></span>
        </div>
        <p class="msg fixed latin">栅格 = 10.0mm</p>
      </div>
      <div class="line">
        <p class="msg">单击并拖动以选择并移动对象</p>
        <button class="degrade" aria-label="自适应降级"><svg viewBox="0 0 16 16" fill="#2c60ac" stroke="#fff" stroke-width="1.500"><path d="M2 5L4 2H14V12L12 14H2z"/><path d="M5 5H12V12H5zM12 5L14 2"/></svg></button>
        <p class="msg fixed">添加时间标记</p>
      </div>
    </div>
    <button class="bigkey" aria-label="设置关键点"><svg viewBox="0 0 26 12"><circle cx="5" cy="6" r="4" fill="none" stroke="#000" stroke-width="2"/><path d="M9 6H25M19 6V11M23 6V10" stroke="#000" stroke-width="3"/></svg></button>
    <div class="keys"><button>自动关键点</button><button>设置关键点</button></div>
    <div class="filters">
      <span class="pick light"><select aria-label="选择集"><option>选定对象</option></select></span>
      <div class="filterrow"><button class="tangent" aria-label="切线"><svg viewBox="0 0 20 18"><path d="M2 6L6 14Q8 16 10 9T14 3L18 7" fill="none" stroke="#e04848" stroke-width="1.500"/><path d="M1 15H9M9 2H16" stroke="#3c4ea8"/><path d="M20 14V18H16z" fill="#fff"/></svg></button><button class="keyfilter">关键点过滤器...</button></div>
    </div>
    <div class="transport">
      <div class="line"><button aria-label="转至开头"><svg viewBox="0 0 18 12"><path d="M1.500 0V12M9 1V11L4 6zM16 1V11L10 6z" stroke="#ddd" fill="#666" stroke-width="1.300"/></svg></button><button aria-label="上一帧"><svg viewBox="0 0 18 12"><path d="M8 1V11L2 6zM11 1V11M14 1V11M17 1V11" stroke="#ddd" fill="#666" stroke-width="1.500"/></svg></button><button aria-label="播放"><svg viewBox="0 0 18 12"><path d="M5 1L14 6 5 11z" stroke="#ddd" fill="#666" stroke-width="1.300"/><path d="M18 9V12H15z" fill="#fff"/></svg></button><button aria-label="下一帧"><svg viewBox="0 0 18 12"><path d="M10 1V11L16 6zM1 1V11M4 1V11M7 1V11" stroke="#ddd" fill="#666" stroke-width="1.500"/></svg></button><button aria-label="转至结尾"><svg viewBox="0 0 18 12"><path d="M16.500 0V12M9 1V11L14 6zM2 1V11L8 6z" stroke="#ddd" fill="#666" stroke-width="1.300"/></svg></button>
        <span class="nav">
          <button aria-label="缩放"><svg viewBox="0 0 18 18"><circle cx="6" cy="8" r="5" fill="url(#metal)"/><path d="M9 12L13 16" stroke="#aaa" stroke-width="3"/><path d="M12 4H17M14.500 1.500V6.500M12 8.500H17" stroke="#eee"/></svg></button>
          <button aria-label="缩放所有视图"><svg viewBox="0 0 18 18"><path d="M2 3H8V8H2zM9 3H15V8H9zM2 9H8V14H2z" fill="#e0e3e8"/><use href="#lens" x="8" y="8" width="9" height="9"/></svg></button>
          <button aria-label="最大化显示"><svg viewBox="0 0 18 18"><path d="M1 5V1H5M13 1H17V5M1 13V17H5" stroke="#ddd" fill="none"/><path d="M5 6L7 4H14V12L12 14H5z" fill="#7fc06a" stroke="#3b6a2c"/><path d="M18 14V18H14z" fill="#fff"/></svg></button>
          <button aria-label="所有视图最大化"><svg viewBox="0 0 18 18"><path d="M6 1H11V6H6zM12 1H17V6H12zM12 7H17V12H12z" fill="#dde0e6"/><path d="M1 9L3 7H10V14L8 16H1z" fill="#7fc06a" stroke="#3b6a2c"/><path d="M18 14V18H14z" fill="#fff"/></svg></button>
        </span>
      </div>
      <div class="line"><button aria-label="关键点模式"><svg viewBox="0 0 18 12"><path d="M1.500 0V12M16.500 0V12M8 2V10L3 6zM10 2V10L15 6z" stroke="#ddd" fill="#666"/></svg></button><input class="frame" value="0" aria-label="当前帧"><span class="spin"><button aria-label="增"></button><button aria-label="减"></button></span>
        <span class="nav">
          <button class="config" aria-label="时间配置"><svg viewBox="0 0 18 18"><path d="M3 1H13V16H3z" fill="#e8e8e8"/><path d="M5 3H9V9H5z" fill="#1e62b4"/><circle cx="13" cy="12" r="4" fill="#fff" stroke="#444"/><path d="M13 10V12H15" stroke="#222" fill="none"/></svg></button>
          <button aria-label="缩放区域"><svg viewBox="0 0 18 18"><path d="M1.500 1.500H12.500V12.500H1.500z" fill="none" stroke="#ddd" stroke-dasharray="2 1"/><use href="#lens" x="8" y="8" width="8" height="8"/></svg></button>
          <button aria-label="平移"><svg viewBox="0 0 18 18"><path d="M6 15L1 9 3 8 5 10 4 3 6 3 7 8 7 1 9 1 10 8 11 2 13 2 12 9 14 5 16 6 14 13 12 16z" fill="#f3f3f3"/><path d="M18 14V18H14z" fill="#fff"/></svg></button>
          <button aria-label="环绕"><svg viewBox="0 0 18 18"><path d="M9 3L15 8 14 14H4L3 9z" fill="none" stroke="#ddd"/><circle cx="9" cy="9" r="3.500" fill="#7fc06a" stroke="#eee"/><path d="M7 3L9 0 11 3zM1 12L5 13 2 16z" fill="#eee"/><path d="M18 14V18H14z" fill="#fff"/></svg></button>
          <button aria-label="最大化视口切换"><svg viewBox="0 0 18 18"><path d="M1 1H11V11H1z" fill="#f2f2f2"/><path d="M4 4L8 8M3.500 7V3.500H7" stroke="#111" stroke-width="1.500" fill="none"/><path d="M14 7V13H7" fill="none" stroke="#aaa"/></svg></button>
        </span>
      </div>
    </div>
  </footer>
</div>
<script src="app.js"></script>
</body>
</html>
```
FILE: styles.css
```css
* { box-sizing: border-box; }
html, body { height: 100%; }
body {
  margin: 0;
  background: #10151c;
  color: #d2d2d2;
  font: 12px/16px "DejaVu Sans Condensed", "Noto Sans CJK SC", sans-serif;
  overflow: hidden;
}
button, input, select { font: inherit; color: inherit; margin: 0; }
button { background: none; border: 0; padding: 0; display: flex; align-items: center; justify-content: center; white-space: nowrap; }
p, h1, ul { margin: 0; padding: 0; }
svg { display: block; }
.defs { position: absolute; }

.window {
  position: relative;
  display: flex;
  flex-direction: column;
  height: 100vh;
  padding: 0 8px 7px 9px;
  border: solid #1b232e;
  border-width: 0 1px 1px 0;
  border-radius: 6px 6px 5px 5px;
  background:
    linear-gradient(#d7e8f8, #eef1ee 15%, #e8eef0 27%, #a9cbf1 28%, #a3c6ef 90%, #8db8e6) left / 8px 100% no-repeat,
    linear-gradient(#bfdaf6, #e8f1f8 20%, #a9cbf1 28%, #a3c6ef) right / 8px 100% no-repeat,
    #a5c8ef;
}

/* title bar */
.titlebar { display: flex; height: 32px; border-top: 2px solid #20262f; margin: 0 -8px 0 0; background: linear-gradient(#a5caf2, #aacdf2 60%, #b9d7f6); }
.app-button {
  position: absolute; left: 8px; top: 8px; width: 41px; height: 41px; z-index: 2;
  border: 1px solid #1b1b1b; background: linear-gradient(#a9a9a9, #c4c4c4 40%, #888); align-items: flex-end;
}
.app-button svg { position: absolute; width: 39px; height: 39px; left: 0; top: 0; }
.app-button b { color: #111; font-size: 9px; line-height: 12px; position: relative; font-weight: 700; }
.qat, .infocenter { display: flex; align-items: center; align-self: flex-end; height: 24px; background: linear-gradient(#a5a5a5, #858585); border: 1px solid #6b6b6b; border-bottom: 0; }
.qat { width: 320px; margin-left: 40px; padding-left: 4px; }
.qat > button:not(.more) { width: 24px; }
.qat button svg, .infocenter button svg { width: 18px; height: 16px; }
.drop { width: 12px; height: 4px; background: #444; clip-path: polygon(25% 0, 75% 0, 50% 100%); flex: none; }
.drop.pale { background: #bbb; }
.workspace { width: 131px; height: 22px; }
.workspace select { background: linear-gradient(#c4c4c4, #e4e4e4); color: #000; border: 1px solid #333; padding-left: 5px; font-size: 12px; }
.more { flex: 1; }
.more svg { width: 10px !important; height: 10px !important; }
.title { flex: 1; display: flex; gap: 28px; justify-content: center; align-items: center; font: 400 12px/16px "Noto Sans CJK SC", sans-serif; color: #05080c; padding-bottom: 1px; white-space: nowrap; }
.title .app { font: 13px/16px "Open Sans", sans-serif; }
.infocenter { width: 457px; }
.infocenter > button { width: 24px; }
.infocenter .expand { width: 12px; }
.infocenter .expand svg { width: 6px; height: 8px; }
.search { width: 180px; height: 22px; border: 1px solid #000; background: #fff; padding: 0 4px; font-size: 11px; font-style: italic; color: #333; }
.search::placeholder { color: #555; opacity: 1; }
.infocenter .user { width: 76px; gap: 4px; color: #111; margin: 0 31px 0 2px; }
.rule { width: 1px; height: 18px; background: #aaa; margin: 0 5px; }
.winbuttons { display: flex; height: 19px; margin: -1px 5px 0 20px; border: 1px solid #45505e; border-radius: 0 0 5px 5px; overflow: hidden; }
.winbuttons button { width: 27px; background: linear-gradient(#e3eefa, #c0d3e8 45%, #9db7d3 50%, #bcd4ec); border-right: 1px solid #66788e; }
.winbuttons svg { width: 14px; height: 12px; }
.winbuttons .close { width: 47px; background: linear-gradient(#e9a99b, #d57461 45%, #b9331c 50%, #d86a4c); border: 0; }

/* menu */
.menubar { display: flex; gap: 25px; height: 21px; padding-left: 54px; align-items: center; background: linear-gradient(#8f8f8f, #555); border-top: 1px solid #444; white-space: nowrap; }
.menubar a { color: #fff; text-decoration: none; font: 12px/18px "Open Sans", "Noto Sans CJK SC", sans-serif; }

/* main toolbar */
.toolbar { display: flex; align-items: center; height: 39px; background: #444; border-top: 1px solid #333; border-bottom: 2px solid #181818; overflow: hidden; }
.grip { width: 7px; flex: none; align-self: stretch; margin: 2px 0 4px; background: linear-gradient(90deg, transparent 2px, #151515 2px 3px, transparent 3px 5px, #151515 5px 6px, transparent 6px); }
.toolbar > button { width: 32px; height: 30px; flex: none; }
.toolbar svg { width: 24px; height: 24px; overflow: visible; }
.toolbar .on { background: #3b7ad6; border: 1px solid #1b1b1b; }
.sep { width: 6px; height: 16px; flex: none; background: linear-gradient(90deg, transparent 2px, #161616 2px 3px, transparent 3px); }
.glyph { font: 14px "Open Sans", sans-serif; fill: #f2f2f2; }
.abc { font: 700 8px "Open Sans", sans-serif; fill: #f2f2f2; }

/* drop-downs */
.pick { position: relative; display: block; flex: none; }
.pick select { appearance: none; width: 100%; height: 100%; border-radius: 0; padding: 0 2px; display: block; }
.pick::after { content: ""; position: absolute; right: 5px; top: 50%; margin-top: -2px; border: 4px solid transparent; border-top-color: #000; border-bottom: 0; pointer-events: none; }
.workspace::after { border-width: 3px; border-bottom: 0; }
.light select { background: linear-gradient(#f2f2f2, #dcdcdc); color: #000; border: 2px solid #161616; border-right-color: #666; border-bottom-color: #666; }
.narrow { width: 69px; height: 20px; margin-top: -8px; }
.gap { margin-left: 1px; margin-right: 1px; }
.wide { width: 119px; height: 20px; margin-top: -8px; }
.wide select { background: linear-gradient(90deg, #575757 calc(100% - 14px), #fff 0); color: #181818; border: 2px solid #111; border-width: 2px 1px 1px 2px; outline: 1px solid #e4e4e4; outline-offset: -3px; }
.wide::after { right: 4px; }

/* ribbon */
.ribbon { display: flex; height: 41px; background: #444; }
.ribbon-body { flex: 1; margin-left: 5px; }
.ribbon-tabs { display: flex; height: 21px; background: #525252; align-items: flex-end; border-top: 1px solid #5c5c5c; }
.ribbon-tabs button { height: 17px; padding: 0 26px; color: #b4b4b4; }
.ribbon-tabs .active { height: 18px; padding: 0 8px 0 24px; margin: 0 1px; color: #ddd; background: linear-gradient(#7a7a7a, #555); border: 1px solid #353535; border-bottom: 0; }
.ribbon-tabs .pill { padding: 0 5px; }
.pill svg { width: 14px; height: 9px; }
.ribbon-tabs .drop { margin-bottom: 7px; }
.ribbon-panel { height: 20px; background: linear-gradient(#444, #393939); border-top: 1px solid #333; display: flex; border-bottom: 1px solid #2c2c2c; }
.ribbon-panel span { border: 1px solid #606060; background: #4c4c4c; padding: 0 3px; line-height: 17px; color: #ddd; }

/* body */
.workspace-area { flex: 1; display: flex; min-height: 0; background: #444; border-right: 1px solid #333; }
.leftbar { width: 38px; flex: none; border-right: 1px solid #1a1a1a; border-bottom: 1px solid #1a1a1a; padding-top: 8px; overflow: hidden; background: linear-gradient(#181818, #181818) 3px 3px / 33px 1px no-repeat; }
.leftbar button { width: 36px; height: 31px; }
.leftbar svg { width: 24px; height: 24px; }
.leftbar .bar { display: block; height: 7px; margin: 0 3px 0 7px; background: linear-gradient(#181818, #181818) 0 0 / 100% 1px no-repeat; }
.leftbar .tall { height: 10px; }
.center { flex: 1; display: flex; flex-direction: column; min-width: 0; margin-left: 1px; }
.viewports { flex: 1; display: grid; grid-template: 1fr 1fr / 1fr 1fr; gap: 4px; min-height: 0; }
.viewport { position: relative; border: 2px solid #303030; min-width: 0; min-height: 0; overflow: hidden; background: #393939; }
.viewport.active { border-color: #80692b; }
.canvas { width: 100%; height: 100%; }
.vlabel { position: absolute; left: 4px; top: 4px; display: flex; gap: 6px; color: #dcdcdc; font-size: 11px; }
.crisp { shape-rendering: crispEdges; fill: none; }
.grid-minor { stroke: #646464; }
.grid-major { stroke: #4a4a4a; }
.grid-axis { stroke: #000; }
.floor-line { stroke: #5c5c5c; }
.cone { stroke: #9bd3ec; fill: none; }
.wire { fill: none; stroke-width: 1; }
.wire.white { stroke: #fff; }
.wire.blue { stroke: #5378d0; }
.axis text { font: 12px "DejaVu Sans", sans-serif; }
.cube { opacity: .9; }
.face { font: 15px "Noto Sans CJK SC", sans-serif; fill: #5b5f66; }
.compass text { font: 11px "Noto Sans CJK SC", sans-serif; fill: #b4b4b4; text-anchor: middle; }
.cube3d text { font: 11px "Noto Sans CJK SC", sans-serif; fill: #5b5b5b; }

/* time */
.timeslider { display: flex; height: 18px; gap: 1px; }
.timeslider button { width: 15px; height: 17px; border: solid #111; border-width: 0 1px 1px 0; font-size: 11px; }
.timeslider .thumb { width: 125px; height: 18px; border: 1px solid #5a5a5a; border-right: 2px solid #0c0c0c; border-bottom: 2px solid #0c0c0c; background: #3f3f3f; }
.trackbar { display: flex; height: 27px; border-top: 2px solid #181818; margin-right: 50px; }
.minicurve { width: 50px; padding-right: 8px; }
.minicurve svg { width: 18px; height: 18px; }
.ruler { flex: 1; background: #2b2b2b; padding: 0 5px; }
.ticks { position: relative; height: 100%; }
.tick { position: absolute; top: 0; width: 1px; height: 11px; background: #777; }
.tick.major { height: 25px; }
.tick span { position: absolute; left: 0; top: 11px; transform: translateX(-50%); font-size: 11px; line-height: 14px; color: #c8c8c8; background: #2b2b2b; }
.tick.current span { background: none; color: #e0d860; }
.now { position: absolute; top: 0; bottom: 1px; left: -3px; width: 8px; background: #7f7922; border: 1px solid #938b2c; }

/* command panel */
.command { width: 182px; flex: none; display: flex; flex-direction: column; padding: 2px 0 0 2px; min-height: 0; }
.tabs { display: flex; height: 25px; gap: 1px; padding-left: 1px; border-bottom: 1px solid #111; flex: none; }
.tabs button { width: 28px; border: solid #111; border-width: 1px 1px 0 1px; border-radius: 4px 4px 0 0; background: #3a3a3a; }
.tabs .active { background: #4a4a4a; margin-bottom: -1px; }
.tabs svg { width: 20px; height: 20px; }
.command input:not([type=checkbox]), .coords input, .frame { background: #575757; border: 2px solid #161616; border-right: 1px solid #777; border-bottom: 1px solid #777; padding: 0 1px; border-radius: 0; font-size: 11px; color: #d8d8d8; min-width: 0; }
.namerow { display: flex; gap: 4px; margin: 6px 4px 0 9px; flex: none; }
.namerow input { flex: 1; height: 19px; }
.swatch { width: 17px; height: 19px; background: #5577cc; border: 1px solid #222; }
.modlist { height: 22px; margin: 6px 8px 0 9px; }
.modlist select { background: linear-gradient(90deg, #575757 calc(100% - 17px), #fff 0); border: 2px solid #161616; border-width: 2px 1px 1px 2px; color: #d8d8d8; }
.stack { list-style: none; height: 127px; flex: none; margin: 6px 10px 0 9px; border: 2px solid #fff; background: #575757; }
.stack li { padding-left: 21px; background: #434343; border-bottom: 1px solid #888; line-height: 15px; }
.stacktools { display: flex; height: 24px; align-items: center; margin: 4px 0 0 10px; flex: none; }
.stacktools button { width: 24px; height: 23px; }
.stacktools svg { width: 18px; height: 14px; }
.stacktools i { width: 12px; height: 16px; background: linear-gradient(90deg, transparent 5px, #111 5px 6px, transparent 6px); }
.stacktools .pressed { border: 1px solid #1d1d1d; background: #3f3f3f; }
.rollarea { flex: 1; display: flex; min-height: 0; margin: 11px 5px 7px 4px; padding-top: 8px; border-top: 2px solid #151515; border-bottom: 1px solid #555; justify-content: space-between; }
.rollout { width: 164px; flex: none; border: 1px solid #161616; border-bottom: 0; padding: 3px 2px 0; overflow: hidden; }
.rollhead { width: 100%; height: 17px; border: 1px solid #666; background: #3e3e3e; color: #eee; position: relative; }
.rollhead span { position: absolute; left: 4px; }
.rollbody { padding: 8px 6px 0 3px; }
.field { display: flex; align-items: center; }
.lensrow { height: 20px; padding-left: 33px; margin-bottom: 3px; gap: 1px; }
.lensrow input { width: 50px; height: 17px; margin-right: 3px; }
.lensrow .fovdir { width: 20px; height: 20px; margin: 0 5px 0 -27px; border: 1px solid #1a1a1a; flex: none; }
.unit { font-size: 11px; }
.fovdir svg { width: 18px; height: 18px; }
.lensrow label { flex: none; }
.spin { display: grid; grid-template-rows: 1fr 1fr; width: 11px; height: 17px; border: 1px solid #222; border-left-color: #555; border-top-color: #555; flex: none; }
.spin button::before { content: ""; border: 3px solid transparent; border-bottom: 4px solid #ccc; border-top: 0; }
.spin button + button::before { border-bottom: 0; border-top: 4px solid #ccc; }
.check { display: flex; align-items: center; height: 18px; padding-left: 9px; gap: 5px; }
.check input { appearance: none; width: 13px; height: 13px; background: #505050; border: 2px solid #1d1d1d; border-right: 1px solid #555; border-bottom: 1px solid #555; margin: 0; }
fieldset { margin: 4px 0 0; border: 1px solid #161616; padding: 0; min-width: 0; }
legend { margin-left: 5px; padding: 0 3px; line-height: 16px; }
.stock { display: grid; grid-template-columns: repeat(3, 41px); gap: 5px 6px; padding: 3px 5px 7px; }
.stock button { height: 21px; border: solid #161616; border-width: 0 1px 1px 0; box-shadow: inset 1px 1px #5c5c5c; font-size: 11px; }
.typerow { margin: 6px 4px 6px 7px; gap: 5px; }
.typerow .pick { flex: 1; height: 21px; }
.env { padding-bottom: 7px; }
.env .check { margin: 3px 0 4px; }
.range { height: 20px; gap: 4px; white-space: nowrap; justify-content: flex-end; padding-right: 8px; }
.range input { width: 54px; height: 16px; }
.clip { padding-bottom: 20px; }
.clip .check { margin-top: 2px; }
.scroll { width: 4px; background: #0d0d0d; display: flex; flex-direction: column; justify-content: flex-end; }
.scroll i { display: block; background: #c4c4c4; height: 59%; }

/* status */
.status { display: flex; height: 50px; background: #444; border-top: 1px solid #333; border-right: 1px solid #333; flex: none; }
.script { width: 99px; display: flex; flex-direction: column; flex: none; padding-bottom: 1px; }
.script input { flex: 1; min-height: 0; width: 98px; border: 2px solid #888; border-right-color: #fff; border-bottom-color: #fff; padding: 0 3px; }
.macro { background: #dcc3c3; }
.listener { background: #fff; color: #000; font: 12px "Liberation Mono", "Noto Sans CJK SC", monospace; }
.prompts { flex: 1; display: flex; flex-direction: column; gap: 4px; padding: 3px 0 0 3px; margin-left: 3px; border-left: 1px solid #222; min-width: 0; }
.line { display: flex; align-items: center; height: 21px; }
.msg { flex: 1; height: 21px; border: 1px solid #1d1d1d; border-right-color: #555; border-bottom-color: #555; padding: 0 5px; line-height: 19px; white-space: nowrap; overflow: hidden; min-width: 0; }
.msg.fixed { flex: none; width: 100px; margin-left: 3px; }
.msg.latin { font-size: 11px; }
.ico { width: 27px; height: 20px; }
.ico svg { width: 16px; height: 18px; }
.coords { display: flex; align-items: center; font-size: 11px; gap: 1px; }
.coords label { width: 11px; text-align: right; }
.coords input { width: 57px; height: 20px; }
.coords .spin { height: 18px; }
.degrade { width: 23px; height: 21px; margin-left: 2px; background: #3b7ad6; border: 1px solid #111; }
.degrade svg { width: 16px; height: 16px; }
.bigkey { width: 41px; height: 44px; margin: 2px 3px 0; border: 1px solid #202020; border-left-color: #555; border-top-color: #555; }
.bigkey svg { width: 26px; height: 12px; }
.keys { display: grid; width: 67px; height: 45px; margin: 2px 3px 0 0; grid-template-rows: 1fr 1fr; gap: 1px; }
.keys button, .keyfilter { border: 1px solid #202020; border-left-color: #555; border-top-color: #555; }
.filters { width: 113px; margin-top: 2px; display: flex; flex-direction: column; gap: 3px; }
.filters .pick { height: 21px; flex: none; }
.filterrow { display: flex; height: 21px; }
.tangent { width: 26px; }
.tangent svg { width: 20px; height: 18px; }
.keyfilter { flex: 1; overflow: hidden; }
.transport { width: 220px; margin: 3px 0 0 9px; display: flex; flex-direction: column; gap: 1px; flex: none; }
.transport .line > button { width: 24px; height: 20px; }
.transport .line > button svg { width: 18px; height: 12px; }
.frame { width: 64px; height: 20px; margin: 0 1px 0 3px; }
.nav { display: flex; margin-left: auto; padding-right: 4px; }
.nav button { width: 22px; height: 20px; }
.nav .config { width: 20px; }
.nav svg { width: 18px; height: 18px; }
```
FILE: app.js
```javascript
const NS = "http://www.w3.org/2000/svg";
const STEP = 14.85;

function addPath(parent, d, cls) {
  const p = document.createElementNS(NS, "path");
  p.setAttribute("d", d);
  p.setAttribute("class", cls);
  parent.appendChild(p);
}

// Orthographic grids: every tenth line is a major line, the zero lines are the axes.
document.querySelectorAll("[data-grid]").forEach((g) => {
  const [ox, oy] = g.dataset.grid.split(",").map(Number);
  let minor = "", major = "";
  for (let i = -44; i <= 44; i++) {
    if (i === 0) continue;
    const off = Math.round(i * STEP) + 0.5;
    const d = `M${ox + off} ${oy - 400}V${oy + 400}M${ox - 700} ${oy + off}H${ox + 700}`;
    if (i % 10 === 0) major += d; else minor += d;
  }
  g.setAttribute("class", "crisp");
  addPath(g, major, "grid-major");
  addPath(g, minor, "grid-minor");
  addPath(g, `M${ox + 0.5} ${oy - 400}V${oy + 400}M${ox - 700} ${oy + 0.5}H${ox + 700}`, "grid-axis");
});

// Perspective floor, 14 by 14 cells around the origin.
function project(i, j) {
  const w = 1 + 0.0248 * (i + j);
  return `${(949 + 20.3 * (i - j) / w).toFixed(1)} ${(190.5 + 411.5 / w).toFixed(1)}`;
}
const floor = document.getElementById("floor");
let lines = "";
for (let k = -7; k <= 7; k++) {
  if (k === 0) continue;
  lines += `M${project(k, -7)}L${project(k, 7)}M${project(-7, k)}L${project(7, k)}`;
}
addPath(floor, lines, "floor-line");
addPath(floor, `M${project(0, -7)}L${project(0, 7)}M${project(-7, 0)}L${project(7, 0)}`, "grid-axis");

// Track bar ruler.
const ticks = document.getElementById("ticks");
const now = document.createElement("div");
now.className = "now";
ticks.appendChild(now);
for (let f = 0; f <= 100; f++) {
  const t = document.createElement("div");
  t.className = "tick" + (f % 5 === 0 ? " major" : "") + (f === 0 ? " current" : "");
  t.style.left = f + "%";
  if (f % 5 === 0) {
    const s = document.createElement("span");
    s.textContent = f;
    t.appendChild(s);
  }
  ticks.appendChild(t);
}
```
